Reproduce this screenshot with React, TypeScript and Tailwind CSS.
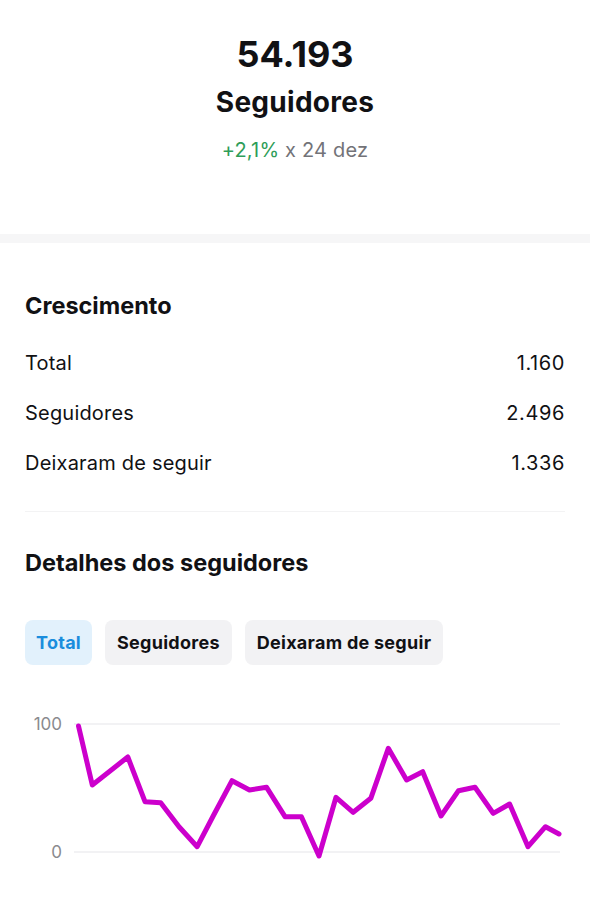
import React from 'react';

const rows = [
  { label: 'Total', value: '1.160' },
  { label: 'Seguidores', value: '2.496' },
  { label: 'Deixaram de seguir', value: '1.336' },
];

const tabs = ['Total', 'Seguidores', 'Deixaram de seguir'];

// chart points in page coordinates (y offset by the svg top at 700)
const points: [number, number][] = [
  [78.5, 726], [92.3, 785], [127.8, 757], [145, 801.7], [160.7, 802.7], [179, 826.7],
  [197.2, 846.7], [213.7, 815], [232, 780.7], [249.5, 790], [266.6, 787.3], [285, 816.7],
  [301.4, 816.7], [319, 856], [336, 797.3], [353.2, 812.3], [370.8, 798.3], [388.3, 748.3],
  [406.6, 780], [422.7, 771.7], [441, 816], [458.5, 790.7], [475, 787.3], [493.2, 813.3],
  [509.6, 804], [528, 846.7], [545.5, 826.7], [559, 834],
];

const FollowersChart = () => {
  const d = points.map(([x, y], i) => `${i === 0 ? 'M' : 'L'}${x} ${y - 700}`).join(' ');
  return (
    <svg width="590" height="180" viewBox="0 0 590 180" className="block">
      <line x1="74" y1="24" x2="560" y2="24" stroke="#eeeef0" strokeWidth="1.5" />
      <line x1="74" y1="152" x2="560" y2="152" stroke="#eeeef0" strokeWidth="1.5" />
      <text x="62" y="30" textAnchor="end" fill="#8a8a8e" fontSize="17" fontFamily="Inter, sans-serif">100</text>
      <text x="62" y="158" textAnchor="end" fill="#8a8a8e" fontSize="17" fontFamily="Inter, sans-serif">0</text>
      <path d={d} fill="none" stroke="#cc00cc" strokeWidth="5" strokeLinejoin="round" strokeLinecap="round" />
    </svg>
  );
};

export default function App() {
  return (
    <div className="w-[590px] h-[905px] bg-white overflow-hidden font-['Inter',sans-serif] text-[#111114]">
      {/* Header */}
      <div className="flex flex-col items-center pt-[34px] pb-[71px]">
        <div className="text-[36px] leading-[40px] font-bold">54.193</div>
        <div className="mt-[12px] text-[28px] leading-[32px] font-bold tracking-[0.01em]">Seguidores</div>
        <div className="mt-[19px] text-[20px] leading-[26px] tracking-[0.01em]">
          <span className="text-[#2e9d58]">+2,1%</span>
          <span className="text-[#737378]"> x 24 dez</span>
        </div>
      </div>

      <div className="h-[9px] bg-[#f6f6f7]" />

      {/* Crescimento */}
      <div className="px-[25px]">
        <h2 className="pt-[49px] text-[23.5px] leading-[28px] font-bold">Crescimento</h2>
        <div className="mt-[18px]">
          {rows.map((r) => (
            <div key={r.label} className="h-[50px] flex items-center justify-between text-[20px] leading-[26px] tracking-[0.01em]">
              <span>{r.label}</span>
              <span className="tracking-[0.03em]">{r.value}</span>
            </div>
          ))}
        </div>
        <div className="mt-[23px] h-px bg-[#f3f3f4]" />

        <h2 className="mt-[37px] text-[23.5px] leading-[28px] font-bold">Detalhes dos seguidores</h2>

        <div className="mt-[43px] flex gap-[13px]">
          {tabs.map((t, i) => (
            <div
              key={t}
              className={
                i === 0
                  ? 'h-[45px] px-[11px] flex items-center rounded-lg bg-[#e2f1fc] text-[#1a8ddd] text-[18px] font-bold tracking-[0.015em]'
                  : 'h-[45px] px-[12px] flex items-center rounded-lg bg-[#f2f2f4] text-[18px] font-bold tracking-[0.015em]'
              }
            >
              {t}
            </div>
          ))}
        </div>
      </div>

      <div className="mt-[35px]">
        <FollowersChart />
      </div>
    </div>
  );
}
